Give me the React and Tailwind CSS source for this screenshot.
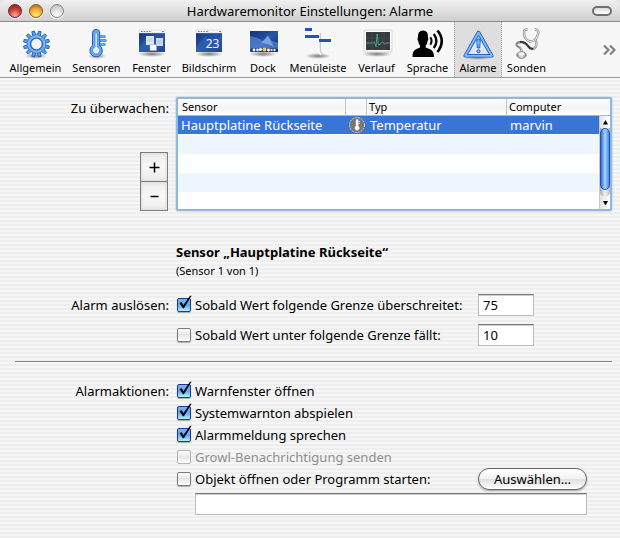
import React from "react";

const Shadow = ({ cy = 27, rx = 12 }) => (
  <ellipse cx="16" cy={cy} rx={rx} ry="3" fill="url(#soft-shadow)" />
);

function SharedDefs() {
  return (
    <svg className="absolute h-0 w-0" aria-hidden="true">
      <defs>
        <radialGradient id="soft-shadow">
          <stop offset="0" stopColor="#000" stopOpacity="0.5" />
          <stop offset="1" stopColor="#000" stopOpacity="0" />
        </radialGradient>
        <linearGradient id="aqua" x1="0" y1="0" x2="0" y2="1">
          <stop offset="0" stopColor="#4d93e6" />
          <stop offset="0.5" stopColor="#8cc4fb" />
          <stop offset="1" stopColor="#3c86dd" />
        </linearGradient>
        <linearGradient id="desktop" x1="0" y1="0" x2="1" y2="1">
          <stop offset="0" stopColor="#12307c" />
          <stop offset="0.5" stopColor="#2455a8" />
          <stop offset="1" stopColor="#14347c" />
        </linearGradient>
        <linearGradient id="steel" x1="0" y1="0" x2="1" y2="0">
          <stop offset="0" stopColor="#888" />
          <stop offset="0.5" stopColor="#e4e4e4" />
          <stop offset="1" stopColor="#888" />
        </linearGradient>
      </defs>
    </svg>
  );
}

function Icon({ children }) {
  return (
    <svg width="32" height="32" viewBox="0 0 32 32" className="block shrink-0 overflow-visible" aria-hidden="true">
      {children}
    </svg>
  );
}

const teeth = [0, 30, 60, 90, 120, 150, 180, 210, 240, 270, 300, 330];

const GearIcon = () => (
  <Icon>
    <Shadow cy={28} rx={11} />
    {teeth.map((a) => (
      <path key={a} d="M14.8 8 L15.2 3 H17.8 L18.2 8 Z" fill="#5ba3ef" stroke="#245fb4" strokeWidth="0.9" transform={`rotate(${a + 15} 16.5 16)`} />
    ))}
    <circle cx="16.5" cy="16" r="7.4" fill="none" stroke="#2a6cc4" strokeWidth="4" />
    <circle cx="16.5" cy="16" r="7.8" fill="none" stroke="#74b5f7" strokeWidth="2.4" />
    <circle cx="16.5" cy="16" r="5.600" fill="#f2f3f5" stroke="#2c5ca0" strokeWidth="0.8" />
  </Icon>
);

const ThermometerIcon = () => (
  <Icon>
    <Shadow cy={28} rx={9} />
    <path d="M18 8.5h5.5M18 12.5h6.5M18 16.5h5.5" stroke="#2b6fca" strokeWidth="2.4" strokeLinecap="round" />
    <path d="M18 8.3h5.5M18 12.3h6.5M18 16.3h5.5" stroke="#8cc4fb" strokeWidth="0.9" strokeLinecap="round" />
    <path d="M11.5 5a3.6 3.6 0 0 1 7.2 0v12.600a6.200 6.200 0 1 1-7.200 0z" fill="#65aaf3" stroke="#2460b8" strokeWidth="1" />
    <path d="M14 5.5a1.2 1.2 0 0 1 2.3 0V19a3.600 3.600 0 1 1-2.300 0z" fill="#e6eefa" stroke="#3a7fd4" strokeWidth="0.7" />
  </Icon>
);

const DesktopBase = () => (
  <>
    <Shadow cy={26} rx={14} />
    <rect x="3" y="2" width="26" height="22" fill="url(#desktop)" />
    <path d="M3 19 L12 8 L20 14 L29 6 V24 H3z" fill="#5c92dd" opacity="0.18" />
    <rect x="3" y="2" width="26" height="3" fill="#fafafa" stroke="#b8bcc6" strokeWidth="0.4" />
    <path d="M5 3.5h11" stroke="#777" strokeWidth="1" strokeDasharray="1.5 1.2" />
    <path d="M26 3.5h2" stroke="#888" strokeWidth="1" />
  </>
);

const WindowsIcon = () => (
  <Icon>
    <DesktopBase />
    <rect x="10" y="8" width="8" height="9" fill="#eef2f9" opacity="0.9" />
    <rect x="20" y="10" width="7" height="8" fill="#dfe8f6" opacity="0.9" />
    <rect x="14" y="16.5" width="6.5" height="6" fill="#fbfcfe" stroke="#8ea6d2" strokeWidth="0.5" />
    <path d="M11.5 11h5M11.5 13h5M21 13h5M21 15h5" stroke="#a9bbdc" strokeWidth="0.6" />
  </Icon>
);

const ScreenIcon = () => (
  <Icon>
    <DesktopBase />
    <text x="19.5" y="19.5" textAnchor="middle" fontFamily="Noto Sans, sans-serif" fontSize="12" fill="#eef4ff">23</text>
  </Icon>
);

const DockIcon = () => (
  <Icon>
    <Shadow cy={26} rx={14} />
    <rect x="3" y="3" width="28" height="21" fill="url(#desktop)" />
    <path d="M3 8 C10 9 14 12 16 13 L21 7 L25 13 L31 15 V21 H3z" fill="#6f9fe4" opacity="0.5" />
    <path d="M14 15 L21 8 L27 19 Q20 15 14 15z" fill="#b9d4f8" opacity="0.45" />
    <rect x="4" y="20" width="26" height="4" fill="#14346f" opacity="0.6" />
    <circle cx="7" cy="22" r="1.4" fill="#fff" />
    <circle cx="10.5" cy="22" r="1.4" fill="#dfe8f6" />
    <circle cx="13.5" cy="21.5" r="1.6" fill="#f6f8fb" />
    <circle cx="17.5" cy="21.5" r="2" fill="#edd03c" />
    <circle cx="21.5" cy="22" r="1.4" fill="#fff" />
    <circle cx="24.5" cy="22" r="1.3" fill="#e8c54a" />
    <circle cx="27.5" cy="22" r="1.2" fill="#e6edf6" />
  </Icon>
);

const MenuIcon = () => (
  <Icon>
    <Shadow cy={28} rx={13} />
    <path d="M17.5 5 V22 Q17.5 25 20 26.500" fill="none" stroke="#c9c9c9" strokeWidth="3" />
    <path d="M16.6 5 V22 Q16.6 25 19 26.500" fill="none" stroke="#fff" strokeWidth="1.8" />
    <rect x="3" y="0" width="7" height="3" fill="#1d56b8" />
    <rect x="3" y="7" width="14" height="3" fill="#1d56b8" />
    <rect x="17" y="11" width="12" height="3" fill="#1d56b8" />
  </Icon>
);

const GraphIcon = () => (
  <Icon>
    <Shadow cy={26} rx={15} />
    <rect x="3" y="2" width="28" height="22" rx="1" fill="#fdfdfd" stroke="#c4c4c4" strokeWidth="0.7" />
    <rect x="5" y="4" width="24" height="18" fill="#343a3d" />
    <path d="M11 4v18M17 4v18M23 4v18M5 10h24M5 16h24" stroke="#4b5356" strokeWidth="0.6" />
    <path d="M5 15h7l1.500-1 1.500 5 1-13 1.500 11 2 -1 2-2.500 2 2.500 1.500-1h4" fill="none" stroke="#3f9f80" strokeWidth="1" />
  </Icon>
);

const SpeechIcon = () => (
  <Icon>
    <path d="M0.5 29 Q0 22.5 5 20.7 L8 19.5 V17.5 Q6.4 16 6.2 12.8 Q5 12.2 5.8 9.5 Q5.6 2.5 11 2.5 Q16.5 2.5 16 9.5 Q16.8 12.2 15.6 12.8 Q15.4 16 13.7 17.5 V19.5 L17.5 21 Q22 22.5 22 29z" fill="#000" />
    <path d="M18.3 9.3 Q20.8 13 18.3 16.8" fill="none" stroke="#000" strokeWidth="2" />
    <path d="M21.8 6 Q27 13 21.8 20" fill="none" stroke="#000" strokeWidth="2.3" />
    <path d="M25.5 2.5 Q34 13 25.5 24" fill="none" stroke="#000" strokeWidth="2.6" />
  </Icon>
);

const AlertIcon = () => (
  <Icon>
    <Shadow cy={29} rx={15} />
    <path d="M16.5 4.5 L29.8 27.8 H3.2 Z" fill="#dfe6ef" stroke="#2664bb" strokeWidth="3.6" strokeLinejoin="round" />
    <path d="M16.5 4.5 L29.8 27.8 H3.2 Z" fill="none" stroke="#7dbaf8" strokeWidth="1.8" strokeLinejoin="round" />
    <path d="M14.6 11.5 Q16.5 10 18.4 11.5 L17.7 20 H15.3z" fill="url(#aqua)" stroke="#2460b5" strokeWidth="0.8" />
    <circle cx="16.5" cy="23.3" r="1.6" fill="#66aaf2" stroke="#2460b5" strokeWidth="0.8" />
  </Icon>
);

const StethoscopeIcon = () => (
  <Icon>
    <path d="M16.500 1.500 Q12.500 1 13 5 Q13.500 12 19 13.500 Q25 13.500 27 6 Q28.500 1.500 24 1.500" fill="none" stroke="#858585" strokeWidth="2.400" />
    <path d="M16.500 1.500 Q12.500 1 13 5 Q13.500 12 19 13.500 Q25 13.500 27 6 Q28.500 1.500 24 1.500" fill="none" stroke="#e6e6e6" strokeWidth="1.100" />
    <path d="M24.500 11.500 Q27 18 23 20.500 Q20 22 17 18 Q13 12.500 7 14.500 Q4 16.500 7 18.500 Q11 20 10.500 24" fill="none" stroke="#8a8a8a" strokeWidth="2.400" />
    <path d="M24.500 11.500 Q27 18 23 20.500" fill="none" stroke="#ddd" strokeWidth="1" />
    <path d="M22 20.800 Q19 21 17 18 Q13.500 13.500 9 14" fill="none" stroke="#333" strokeWidth="1.800" />
    <path d="M6.500 16.500 Q11.500 19 10.500 24" fill="none" stroke="#ddd" strokeWidth="0.900" />
    <ellipse cx="10.500" cy="27" rx="4.800" ry="3.400" fill="url(#steel)" stroke="#777" strokeWidth="0.800" />
    <ellipse cx="10.500" cy="26" rx="3" ry="1.700" fill="#f4f4f4" />
  </Icon>
);

const tools = [
  { label: "Allgemein", Glyph: GearIcon },
  { label: "Sensoren", Glyph: ThermometerIcon },
  { label: "Fenster", Glyph: WindowsIcon },
  { label: "Bildschirm", Glyph: ScreenIcon },
  { label: "Dock", Glyph: DockIcon },
  { label: "Menüleiste", Glyph: MenuIcon },
  { label: "Verlauf", Glyph: GraphIcon },
  { label: "Sprache", Glyph: SpeechIcon },
  { label: "Alarme", Glyph: AlertIcon, active: true },
  { label: "Sonden", Glyph: StethoscopeIcon },
];

function TitleBar() {
  const light = "size-[14px] rounded-full border shadow-[0_1px_0_#fff]";
  return (
    <header className="grid h-[22px] grid-cols-[1fr_auto_1fr] items-center rounded-t-md border-b border-[#8c8c8c] bg-linear-to-b from-[#f0f0f0] to-[#cfcfcf] px-2">
      <div className="flex gap-[7px]">
        <button aria-label="Schließen" className={light + " border-[#6c2c2c] bg-[radial-gradient(circle_at_50%_85%,#ffaa9c,#cf3f3a_50%,#7e1f1e)]"} />
        <button aria-label="Minimieren" className={light + " border-[#8d5a1c] bg-[radial-gradient(circle_at_50%_85%,#fff07a,#f3a52c_55%,#a0541a)]"} />
        <button aria-label="Zoomen" className={light + " border-[#8a8a8a] bg-[radial-gradient(circle_at_50%_80%,#fafafa,#d5d5d5_60%,#aaa)]"} />
      </div>
      <h1 className="text-[13px] leading-[18px]">Hardwaremonitor Einstellungen: Alarme</h1>
      <button aria-label="Symbolleiste ein- oder ausblenden" className="h-[10px] w-5 justify-self-end rounded-full border-2 border-[#707070] bg-linear-to-b from-[#ddd] to-white" />
    </header>
  );
}

function Toolbar() {
  return (
    <nav className="flex h-14 items-stretch justify-between border-b border-[#9a9a9a] bg-[#f7f7f7] pr-1 pl-[5px]">
      <div className="grid grid-cols-[61px_61px_49px_66px_42px_68px_49px_53px_48px_49px]">
        {tools.map(({ label, Glyph, active }) => (
          <button
            key={label}
            className={
              active
                ? "flex flex-col items-center border-x border-dotted border-[#a0a0a0] bg-[#dedede] pt-[6px]"
                : "flex flex-col items-center pt-[6px]"
            }
          >
            <Glyph />
            <span className="text-[11px] leading-[16px] whitespace-nowrap">{label}</span>
          </button>
        ))}
      </div>
      <button aria-label="Weitere Symbole" className="self-center">
        <svg width="13" height="10" viewBox="0 0 13 10" fill="none" stroke="#808080" strokeWidth="2.200">
          <path d="M1 0.500 L5.500 5 L1 9.500 M7 0.500 L11.500 5 L7 9.500" />
        </svg>
      </button>
    </nav>
  );
}

function ScrollBar() {
  return (
    <div className="flex h-[93px] w-[11px] flex-col items-center border-l border-[#c9c9c9] bg-linear-to-r from-[#e4e4e4] to-white">
      <svg width="9" height="12" viewBox="0 0 9 12"><path d="M4.500 4 L7 8.500 H2z" fill="#000" /></svg>
      <div className="flex w-[10px] flex-1 flex-col rounded-b-full bg-linear-to-r from-[#aaa] via-[#f4f4f4] to-[#bbb] pb-[7px]">
        <div className="flex-1 rounded-full border border-[#2452b4] bg-linear-to-r from-[#2f6fd6] via-[#a9d6ff] to-[#3f86e4]" />
      </div>
      <svg width="9" height="12" viewBox="0 0 9 12"><path d="M4.500 8.500 L7 4 H2z" fill="#000" /></svg>
    </div>
  );
}

function SensorTable() {
  const head = "h-[17px] border-b border-[#b5b5b5] p-0 text-left text-[11px] leading-[16px] font-normal";
  const divided = " border-r border-r-[#c4c4c4]";
  const cell = "h-[19px] border-b border-white bg-[#3875d7] p-0 pl-[3px] text-[13px] leading-[18px] text-white";
  return (
    <div className="rounded-xs border-2 border-[#8fb8dd] bg-white shadow-[0_0_2px_#8fb8dd]">
      <table className="w-full table-fixed border-separate border-spacing-0">
        <colgroup>
          <col />
          <col className="w-[21px]" />
          <col className="w-[140px]" />
          <col className="w-[92px]" />
          <col className="w-[11px]" />
        </colgroup>
        <thead className="bg-linear-to-b from-white via-[#f4f4f4] to-white">
          <tr>
            <th className={head + divided + " pl-1"}>Sensor</th>
            <th className={head + divided} aria-label="Art" />
            <th className={head + divided + " pl-[2px]"}>Typ</th>
            <th className={head + " pl-[2px]"} colSpan={2}>Computer</th>
          </tr>
        </thead>
        <tbody>
          <tr>
            <td className={cell}>Hauptplatine Rückseite</td>
            <td className={cell}>
              <svg width="16" height="16" viewBox="0 0 16 16" className="block" aria-hidden="true">
                <circle cx="8" cy="8" r="7.500" fill="#777" stroke="#d9d4c4" strokeWidth="1" strokeDasharray="2 1" />
                <path d="M6.800 3.500a1.300 1.300 0 0 1 2.600 0v5.700a2.300 2.300 0 1 1-2.600 0z" fill="#fff" />
                <path d="M9.500 4.500h1.500M9.500 6.500h1.500" stroke="#fff" strokeWidth="0.800" />
              </svg>
            </td>
            <td className={cell}>Temperatur</td>
            <td className={cell}>marvin</td>
            <td className="p-0 align-top" rowSpan={5}>
              <ScrollBar />
            </td>
          </tr>
          <tr><td colSpan={4} className="h-[19px] bg-[#edf5fe] p-0" /></tr>
          <tr><td colSpan={4} className="h-[19px] bg-white p-0" /></tr>
          <tr><td colSpan={4} className="h-[19px] bg-[#edf5fe] p-0" /></tr>
          <tr><td colSpan={4} className="h-[17px] bg-white p-0" /></tr>
        </tbody>
      </table>
    </div>
  );
}

function Check({ children, checked, disabled }) {
  return (
    <label className={disabled ? "flex h-[22px] items-center gap-1 text-[#8e8e8e]" : "flex h-[22px] items-center gap-1"}>
      <span className="relative ml-px block size-[14px] shrink-0">
        <input
          type="checkbox"
          defaultChecked={checked}
          disabled={disabled}
          className="peer block size-[14px] appearance-none rounded-[2px] border border-[#7c7c7c] bg-linear-to-b from-white via-[#e6e6e6] to-white shadow-[0_1px_1px_#aaa] checked:border-[#20388c] checked:from-[#7db2ee] checked:via-[#5da6f2] checked:to-[#b4f0ff] disabled:border-[#b4b4b4] disabled:shadow-none"
        />
        <svg width="16" height="16" viewBox="0 0 16 16" className="pointer-events-none absolute -top-[3px] left-0 hidden peer-checked:block" aria-hidden="true">
          <path d="M2.500 8 L4.700 7.300 L6.400 10.200 L13 0.800 L14.600 0.800 L6.900 13.300 L5.900 13.300 Z" fill="#000" />
        </svg>
      </span>
      <span>{children}</span>
    </label>
  );
}

const fieldStyle = "h-[22px] border border-[#bcbcbc] border-t-[#7a7a7a] bg-white px-1 text-[13px] leading-[18px] shadow-[inset_0_1px_0_#ccc] outline-none";

export default function App() {
  const step = "flex flex-1 items-center justify-center bg-linear-to-b from-[#ececec] via-[#f8f8f8] to-[#ececec] shadow-[inset_0_0_3px_#c8c8c8]";
  const columns = "grid grid-cols-[169px_1fr] gap-x-[7px]";
  return (
    <div className="flex min-h-screen flex-col bg-[#dfe3e8] font-['Noto_Sans','Open_Sans',sans-serif] text-[13px] leading-[18px] text-black">
      <SharedDefs />
      <TitleBar />
      <Toolbar />
      <main className="flex-1 bg-[repeating-linear-gradient(to_bottom,#f6f6f6_0px,#f6f6f6_2px,#eeeeee_2px,#eeeeee_4px)] pt-[19px] pr-2 pb-5">
        <section className={columns}>
          <div className="flex flex-col items-end justify-between pt-[2px]">
            <h2>Zu überwachen:</h2>
            <div className="mr-px flex h-[59px] w-7 flex-col divide-y divide-[#7e7e7e] border border-[#7e7e7e]">
              <button aria-label="Sensor hinzufügen" className={step}>
                <svg width="11" height="11" viewBox="0 0 11 11" stroke="#000" strokeWidth="1.500"><path d="M5.500 0.500v10M0.500 5.500h10" /></svg>
              </button>
              <button aria-label="Sensor entfernen" className={step}>
                <svg width="11" height="11" viewBox="0 0 11 11" stroke="#000" strokeWidth="1.500"><path d="M1.500 5.500h8" /></svg>
              </button>
            </div>
          </div>
          <SensorTable />
        </section>

        <section className="mt-8 pl-[176px]">
          <h2 className="font-bold">Sensor „Hauptplatine Rückseite“</h2>
          <p className="mt-[2px] text-[11px] leading-[16px]">(Sensor 1 von 1)</p>
        </section>

        <section className={columns + " mt-[15px]"}>
          <h2 className="pt-[2px] text-right">Alarm auslösen:</h2>
          <div className="grid grid-cols-[302px_56px] gap-y-2">
            <Check checked>Sobald Wert folgende Grenze überschreitet:</Check>
            <input aria-label="Obere Grenze" defaultValue="75" className={fieldStyle} />
            <Check>Sobald Wert unter folgende Grenze fällt:</Check>
            <input aria-label="Untere Grenze" defaultValue="10" className={fieldStyle} />
          </div>
        </section>

        <hr className="mt-[15px] ml-[15px] border-t border-[#868686]" />

        <section className={columns + " mt-[18px]"}>
          <h2 className="pt-[2px] text-right">Alarmaktionen:</h2>
          <div className="pr-[25px]">
            <Check checked>Warnfenster öffnen</Check>
            <Check checked>Systemwarnton abspielen</Check>
            <Check checked>Alarmmeldung sprechen</Check>
            <Check disabled>Growl-Benachrichtigung senden</Check>
            <div className="flex items-center justify-between">
              <Check>Objekt öffnen oder Programm starten:</Check>
              <button className="h-[22px] w-[109px] rounded-full border border-[#666] bg-[linear-gradient(to_bottom,#ffffff,#f2f2f2_48%,#e0e0e0_52%,#ffffff)] text-[13px] leading-[18px] shadow-[0_1px_2px_#999]">
                Auswählen…
              </button>
            </div>
            <div className="mt-[3px] flex pl-[19px]">
              <input aria-label="Objekt oder Programm" className={fieldStyle + " min-w-0 flex-1"} />
            </div>
          </div>
        </section>
      </main>
    </div>
  );
}
